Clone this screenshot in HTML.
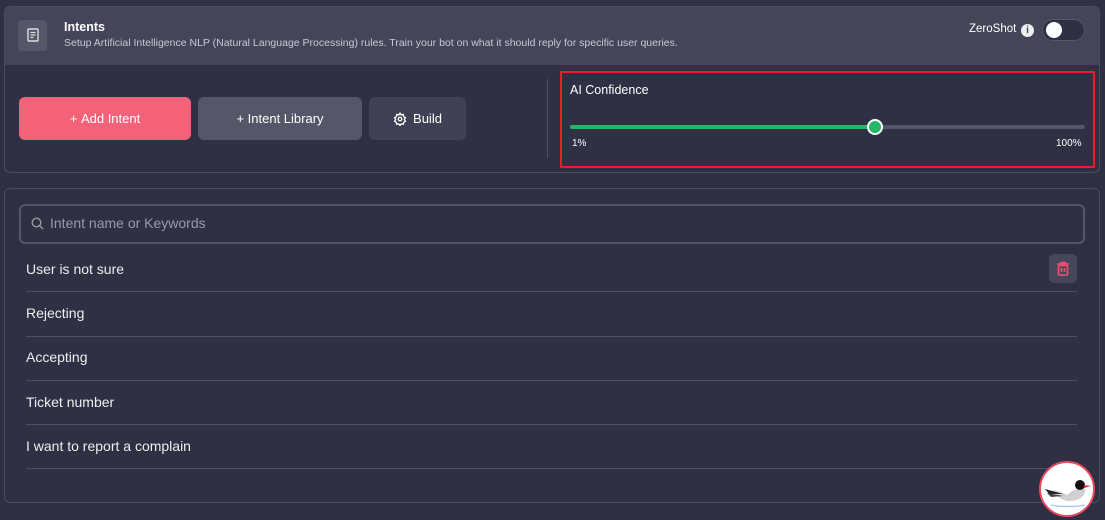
<!DOCTYPE html>
<html><head><style>
*{box-sizing:border-box;margin:0;padding:0}
body{width:1105px;height:520px;background:#2f3044;font-family:"Liberation Sans",sans-serif;color:#fff;position:relative;overflow:hidden}
.abs{position:absolute}
.card{position:absolute;left:4px;width:1096px;border:1px solid #4a4b62;border-radius:6px;overflow:hidden}
.btn{position:absolute;top:97px;height:43px;border-radius:6px;font-size:13px;display:flex;align-items:center;justify-content:center;gap:6px}
.row{position:absolute;left:26px;width:1051px;font-size:14px;color:#eee}
.sep{position:absolute;left:26px;width:1051px;height:1px;background:#4f5066}
</style></head><body>
<div class="card" style="top:6px;height:167px">
  <div class="abs" style="left:0;top:0;width:100%;height:58px;background:#45455a"></div>
</div>
<div class="abs" style="left:18px;top:20px;width:29px;height:31px;background:#56566a;border-radius:4px"></div>
<svg class="abs" style="left:27px;top:28px" width="12" height="14" viewBox="0 0 12 14"><rect x="1" y="1" width="10" height="12" rx="1" fill="none" stroke="#ddd" stroke-width="1.4"/><path d="M3.5 4.5h5M3.5 7h5M3.5 9.5h3" stroke="#ddd" stroke-width="1.2"/></svg>
<div class="abs" style="left:64px;top:20px;font-size:12.5px;font-weight:bold">Intents</div>
<div class="abs" style="left:64px;top:37px;font-size:10.5px;color:#c9c9d3">Setup Artificial Intelligence NLP (Natural Language Processing) rules. Train your bot on what it should reply for specific user queries.</div>
<div class="abs" style="left:969px;top:23px;font-size:11.5px">ZeroShot</div>
<div class="abs" style="left:1021px;top:24px;width:13px;height:13px;border-radius:50%;background:#eee;color:#45455a;font-size:10px;font-weight:bold;text-align:center;line-height:13px">i</div>
<div class="abs" style="left:1042px;top:19px;width:43px;height:22px;border-radius:11px;background:#2f3044;border:1px solid #55566b"></div>
<div class="abs" style="left:1046px;top:22px;width:16px;height:16px;border-radius:50%;background:#fff"></div>
<div class="btn" style="left:19px;width:172px;background:#f4627a">+&nbsp;Add Intent</div>
<div class="btn" style="left:198px;width:164px;background:#565669">+&nbsp;Intent Library</div>
<div class="btn" style="left:369px;width:97px;background:#404154"><svg width="14" height="14" viewBox="0 0 24 24" fill="none" stroke="#fff" stroke-width="2.2"><circle cx="12" cy="12" r="3"/><path d="M12 2l2 3 3.5-.8.8 3.5 3 2-2 3 2 3-3 2-.8 3.5-3.5-.8-2 3-2-3-3.5.8-.8-3.5-3-2 2-3-2-3 3-2 .8-3.5 3.5.8z"/></svg>Build</div>
<div class="abs" style="left:547px;top:79px;width:1px;height:79px;background:#4f5066"></div>
<div class="abs" style="left:560px;top:71px;width:535px;height:97px;border:2px solid #ee1c2a"></div>
<div class="abs" style="left:570px;top:83px;font-size:12.5px">AI Confidence</div>
<div class="abs" style="left:570px;top:125px;width:515px;height:4px;border-radius:2px;background:#56566a"></div>
<div class="abs" style="left:570px;top:125px;width:305px;height:4px;border-radius:2px;background:#22b866"></div>
<div class="abs" style="left:867px;top:119px;width:16px;height:16px;border-radius:50%;background:#22b866;border:2.5px solid #fff"></div>
<div class="abs" style="left:572px;top:138px;font-size:10px">1%</div>
<div class="abs" style="left:1056px;top:138px;font-size:10px">100%</div>

<div class="card" style="top:188px;height:315px"></div>
<div class="abs" style="left:19px;top:204px;width:1066px;height:40px;border:2px solid #55566b;border-radius:6px"></div>
<svg class="abs" style="left:31px;top:217px" width="13" height="13" viewBox="0 0 13 13" fill="none" stroke="#999" stroke-width="1.4"><circle cx="5.5" cy="5.5" r="4.3"/><path d="M8.7 8.7l3.3 3.3"/></svg>
<div class="abs" style="left:50px;top:215px;font-size:14px;color:#9a9aa6">Intent name or Keywords</div>
<div class="row" style="top:261px">User is not sure</div>
<div class="sep" style="top:291px"></div>
<div class="row" style="top:305px">Rejecting</div>
<div class="sep" style="top:336px"></div>
<div class="row" style="top:349px">Accepting</div>
<div class="sep" style="top:380px"></div>
<div class="row" style="top:394px">Ticket number</div>
<div class="sep" style="top:424px"></div>
<div class="row" style="top:438px">I want to report a complain</div>
<div class="sep" style="top:468px"></div>
<div class="abs" style="left:1049px;top:254px;width:28px;height:29px;border-radius:5px;background:#46475b"></div>
<svg class="abs" style="left:1056px;top:261px" width="14" height="15" viewBox="0 0 14 15" fill="none" stroke="#f0526c" stroke-width="1.6"><path d="M1 3h12M5 3V1.5h4V3"/><rect x="2.5" y="4.5" width="9" height="9.5" rx="1"/><path d="M5.5 7v4M8.5 7v4"/></svg>
<div class="abs" style="left:1039px;top:461px;width:56px;height:56px;border-radius:50%;background:#fff;border:2px solid #e84a5e;overflow:hidden">
<svg width="52" height="52" viewBox="0 0 52 52"><path d="M12 27c6 1 10 3 14 5 6-5 12-8 18-6 1 7-6 12-16 12-8 0-12-5-16-11z" fill="#d0d0d4"/><path d="M4 26l18 5-14 0z" fill="#222"/><path d="M6 30l16 3-12 1z" fill="#444"/><circle cx="39" cy="22" r="5" fill="#111"/><path d="M43 22l7 1-7 2z" fill="#d33"/><path d="M10 42c10 2 24 2 34 0" stroke="#9cc6e0" stroke-width="1.2" fill="none"/></svg></div>
</body></html>
